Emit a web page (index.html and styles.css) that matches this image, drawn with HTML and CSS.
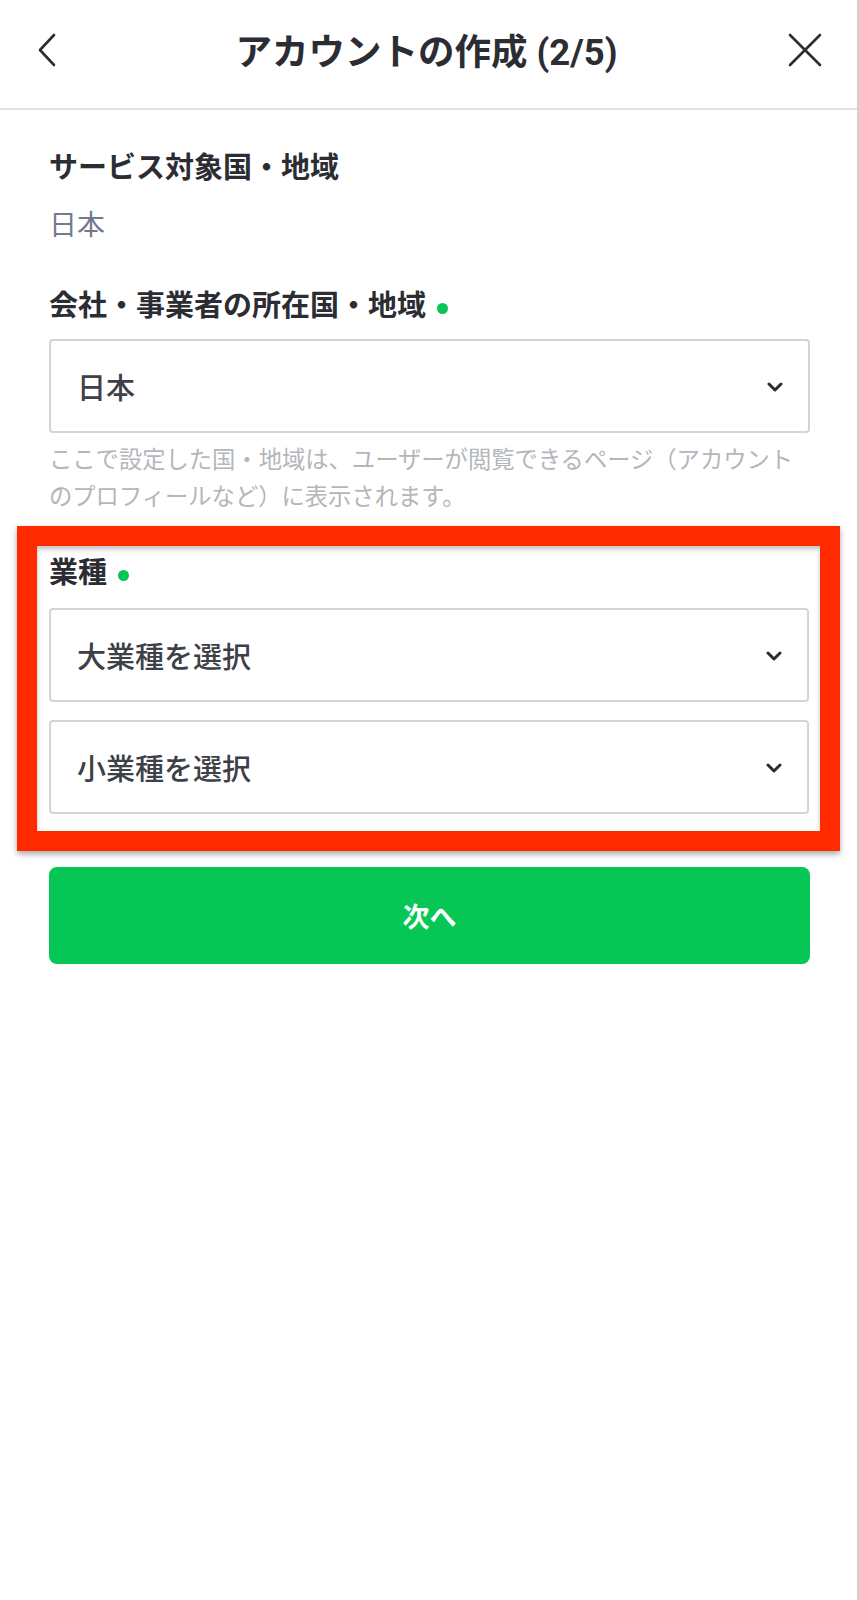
FILE: index.html
```html
<!DOCTYPE html>
<html lang="ja">
<head>
    <meta charset="UTF-8">
    <meta name="viewport" content="width=device-width, initial-scale=1.0">
    <title>アカウントの作成 (2/5)</title>
    <link rel="stylesheet" href="styles.css">
</head>
<body>

<div class="app">
    <header class="top-bar">
        <svg class="icon-back" width="20" height="34" viewBox="0 0 20 34">
            <path d="M17 2 L3 17 L17 32" fill="none" stroke="#2b2d33" stroke-width="2.6" stroke-linecap="round" stroke-linejoin="round"/>
        </svg>
        <h1>アカウントの作成 (2/5)</h1>
        <svg class="icon-close" width="34" height="34" viewBox="0 0 34 34">
            <path d="M2 2 L32 32 M32 2 L2 32" fill="none" stroke="#2b2d33" stroke-width="2.6" stroke-linecap="round"/>
        </svg>
    </header>

    <main class="content">
        <div class="field">
            <div class="label">サービス対象国・地域</div>
            <div class="value">日本</div>
        </div>

        <div class="field field-company">
            <div class="label">会社・事業者の所在国・地域<span class="required"></span></div>
            <div class="select">
                <span>日本</span>
                <svg class="chevron" width="16" height="10" viewBox="0 0 16 10"><path d="M2 2 L8 8 L14 2" fill="none" stroke="#2b2d33" stroke-width="3" stroke-linecap="round" stroke-linejoin="round"/></svg>
            </div>
            <p class="hint">ここで設定した国・地域は、ユーザーが閲覧できるページ（アカウントのプロフィールなど）に表示されます。</p>
        </div>

        <div class="highlight">
            <div class="label">業種<span class="required"></span></div>
            <div class="select select-large">
                <span>大業種を選択</span>
                <svg class="chevron" width="16" height="10" viewBox="0 0 16 10"><path d="M2 2 L8 8 L14 2" fill="none" stroke="#2b2d33" stroke-width="3" stroke-linecap="round" stroke-linejoin="round"/></svg>
            </div>
            <div class="select select-small">
                <span>小業種を選択</span>
                <svg class="chevron" width="16" height="10" viewBox="0 0 16 10"><path d="M2 2 L8 8 L14 2" fill="none" stroke="#2b2d33" stroke-width="3" stroke-linecap="round" stroke-linejoin="round"/></svg>
            </div>
        </div>

        <button class="btn-next" type="button">次へ</button>
    </main>
</div>

</body>
</html>
```

FILE: styles.css
```css
body {
    margin: 0;
    font-family: Roboto, "Noto Sans CJK JP", sans-serif;
    background-color: #fff;
    color: #2b2d33;
}
.app {
    width: 859px;
    min-height: 1600px;
    border-right: 2px solid #cfcfcf;
    box-sizing: border-box;
}
.top-bar {
    height: 110px;
    box-sizing: border-box;
    border-bottom: 2px solid #e2e2e2;
    display: flex;
    align-items: center;
    justify-content: space-between;
    padding: 0 35px 9px 37px;
}
.top-bar h1 {
    margin: 0 0 0 8px;
    font-size: 36.5px;
    font-weight: bold;
    color: #2b2d33;
}
.content {
    padding: 39px 47px 0 49px;
}
.label {
    font-size: 29px;
    line-height: 39px;
    font-weight: bold;
    color: #2b2d33;
    display: flex;
    align-items: center;
}
.required {
    width: 11px;
    height: 11px;
    border-radius: 50%;
    background-color: #06c755;
    margin-left: 11px;
    margin-top: 4px;
}
.value {
    margin-top: 18px;
    font-size: 28px;
    line-height: 39px;
    color: #737a8c;
}
.field-company {
    margin-top: 42px;
}
.field-company .select {
    margin-top: 13px;
}
.select {
    height: 94px;
    box-sizing: border-box;
    border: 2px solid #d4d4d4;
    border-radius: 4px;
    display: flex;
    align-items: center;
    justify-content: space-between;
    padding: 0 25px 0 26px;
    font-size: 29px;
    font-weight: 500;
    color: #3d4047;
}
.chevron {
    margin-top: 2px;
}
.hint {
    margin: 9px 0 0;
    font-size: 23.3px;
    line-height: 37px;
    color: #b3b6bb;
}
.highlight {
    margin: 10px -30px 0 -32px;
    border: 20px solid #ff2a00;
    padding: 8px 11px 17px 12px;
    box-shadow: 0 3px 6px rgba(0, 0, 0, 0.35), inset 0 3px 5px rgba(0, 0, 0, 0.25);
}
.select-large {
    margin-top: 15px;
}
.select-small {
    margin-top: 18px;
}
.btn-next {
    display: block;
    width: 100%;
    height: 97px;
    margin-top: 16px;
    border: none;
    border-radius: 8px;
    background-color: #06c755;
    color: #fff;
    font-family: Roboto, "Noto Sans CJK JP", sans-serif;
    font-size: 27px;
    font-weight: bold;
    cursor: pointer;
}
```
